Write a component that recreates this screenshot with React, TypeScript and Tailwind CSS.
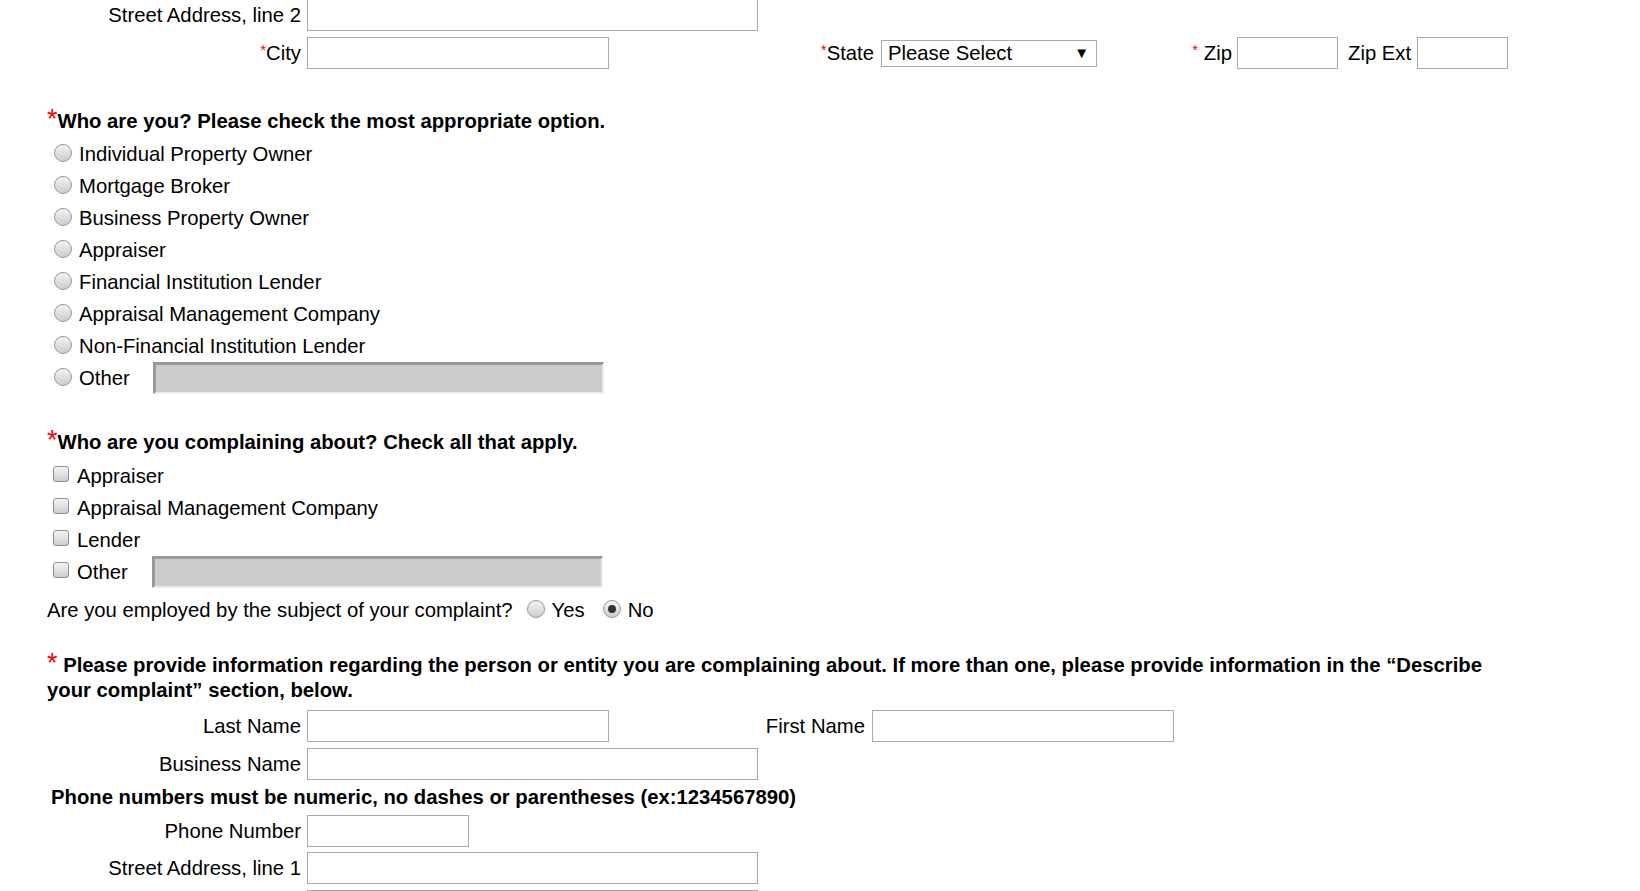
import React from "react";

const whoOptions = [
  "Individual Property Owner",
  "Mortgage Broker",
  "Business Property Owner",
  "Appraiser",
  "Financial Institution Lender",
  "Appraisal Management Company",
  "Non-Financial Institution Lender",
];

const aboutOptions = ["Appraiser", "Appraisal Management Company", "Lender"];

function Star() {
  return <span className="text-[15px] leading-[0] align-[5px] text-[#ff0000]">*</span>;
}

function HeadStar() {
  return <span className="text-[27px] leading-[0] font-normal text-[#ff0000]">*</span>;
}

function Radio({ checked = false }: { checked?: boolean }) {
  return (
    <span className="flex h-[18px] w-[18px] shrink-0 items-center justify-center rounded-full border border-[#979797] bg-linear-to-b from-[#f4f4f4] to-[#cdcdcd]">
      {checked && <span className="h-[8px] w-[8px] rounded-full bg-[#333]" />}
    </span>
  );
}

function Checkbox() {
  return (
    <span className="block h-[16px] w-[16px] shrink-0 rounded-[3px] border border-[#8f8f8f] bg-linear-to-b from-[#f4f4f4] to-[#cecece]" />
  );
}

function DisabledBox() {
  return (
    <div className="h-[32px] w-[451px] shrink-0 border-t-[3px] border-l-[3px] border-b-2 border-r-2 border-t-[#999] border-l-[#999] border-b-[#ececec] border-r-[#ececec] bg-[#cccccc]" />
  );
}

function FieldRow({ label, children, star }: { label: string; children: React.ReactNode; star?: boolean }) {
  return (
    <div className="flex h-[32px] items-center">
      <span className="w-[301px] shrink-0 text-right">
        {star && <Star />}
        {label}
      </span>
      {children}
    </div>
  );
}

export default function App() {
  return (
    <div className="h-[891px] w-[1640px] overflow-hidden bg-white text-[20.3px] leading-[24px] text-black font-['Liberation_Sans',Arial,sans-serif]">
      {/* address tail */}
      <div className="-mt-[1px]">
        <FieldRow label="Street Address, line 2">
          <input className="ml-[6px] h-[32px] w-[451px] border border-[#a9a9a9]" />
        </FieldRow>
      </div>

      <div className="mt-[6px]">
        <FieldRow label="City" star>
          <input className="ml-[6px] h-[32px] w-[302px] border border-[#a9a9a9]" />
          <span className="w-[265px] shrink-0 text-right">
            <Star />
            State
          </span>
          <div className="ml-[7px] flex h-[27px] w-[216px] shrink-0 items-center justify-between border border-[#a9a9a9] pl-[6px] pr-[7px]">
            <span>Please Select</span>
            <span className="text-[15px]">▼</span>
          </div>
          <span className="w-[135px] shrink-0 text-right">
            <Star /> Zip
          </span>
          <input className="ml-[5px] h-[32px] w-[101px] border border-[#a9a9a9]" />
          <span className="ml-[10px]">Zip Ext</span>
          <input className="ml-[6px] h-[32px] w-[91px] border border-[#a9a9a9]" />
        </FieldRow>
      </div>

      {/* who are you */}
      <h3 className="mt-[40px] pl-[47px] font-bold">
        <HeadStar />
        Who are you? Please check the most appropriate option.
      </h3>
      <div className="mt-[5px]">
        {whoOptions.map((o) => (
          <div key={o} className="flex h-[32px] items-start pl-[54px]">
            <span className="mt-[6px]">
              <Radio />
            </span>
            <span className="ml-[7px] leading-[32px]">{o}</span>
          </div>
        ))}
        <div className="flex h-[32px] items-start pl-[54px]">
          <span className="mt-[6px]">
            <Radio />
          </span>
          <span className="ml-[7px] w-[74px] shrink-0 leading-[32px]">Other</span>
          <DisabledBox />
        </div>
      </div>

      {/* complaining about */}
      <h3 className="mt-[36px] pl-[47px] font-bold">
        <HeadStar />
        Who are you complaining about? Check all that apply.
      </h3>
      <div className="mt-[6px]">
        {aboutOptions.map((o) => (
          <div key={o} className="flex h-[32px] items-start pl-[53px]">
            <span className="mt-[6px]">
              <Checkbox />
            </span>
            <span className="ml-[8px] leading-[32px]">{o}</span>
          </div>
        ))}
        <div className="flex h-[32px] items-start pl-[53px]">
          <span className="mt-[6px]">
            <Checkbox />
          </span>
          <span className="ml-[8px] w-[75px] shrink-0 leading-[32px]">Other</span>
          <DisabledBox />
        </div>
      </div>

      <div className="mt-[6px] flex h-[32px] items-start pl-[47px]">
        <span className="leading-[32px]">Are you employed by the subject of your complaint?</span>
        <span className="ml-[14px] mt-[6px]">
          <Radio />
        </span>
        <span className="ml-[7px] leading-[32px]">Yes</span>
        <span className="ml-[18px] mt-[6px]">
          <Radio checked />
        </span>
        <span className="ml-[7px] leading-[32px]">No</span>
      </div>

      {/* subject info */}
      <p className="mt-[27px] w-[1502px] pl-[47px] font-bold leading-[25px]">
        <HeadStar /> Please provide information regarding the person or entity you are complaining about. If more
        than one, please provide information in the “Describe your complaint” section, below.
      </p>

      <div className="mt-[7px]">
        <FieldRow label="Last Name">
          <input className="ml-[6px] h-[32px] w-[302px] border border-[#a9a9a9]" />
          <span className="w-[256px] shrink-0 text-right">First Name</span>
          <input className="ml-[7px] h-[32px] w-[302px] border border-[#a9a9a9]" />
        </FieldRow>
      </div>
      <div className="mt-[6px]">
        <FieldRow label="Business Name">
          <input className="ml-[6px] h-[32px] w-[451px] border border-[#a9a9a9]" />
        </FieldRow>
      </div>
      <p className="mt-[5px] pl-[51px] font-bold">
        Phone numbers must be numeric, no dashes or parentheses (ex:1234567890)
      </p>
      <div className="mt-[6px]">
        <FieldRow label="Phone Number">
          <input className="ml-[6px] h-[32px] w-[162px] border border-[#a9a9a9]" />
        </FieldRow>
      </div>
      <div className="mt-[5px]">
        <FieldRow label="Street Address, line 1">
          <input className="ml-[6px] h-[32px] w-[451px] border border-[#a9a9a9]" />
        </FieldRow>
      </div>
      <div className="mt-[6px] flex h-[32px] items-center">
        <input className="ml-[307px] h-[32px] w-[451px] border border-[#a9a9a9]" />
      </div>
    </div>
  );
}
